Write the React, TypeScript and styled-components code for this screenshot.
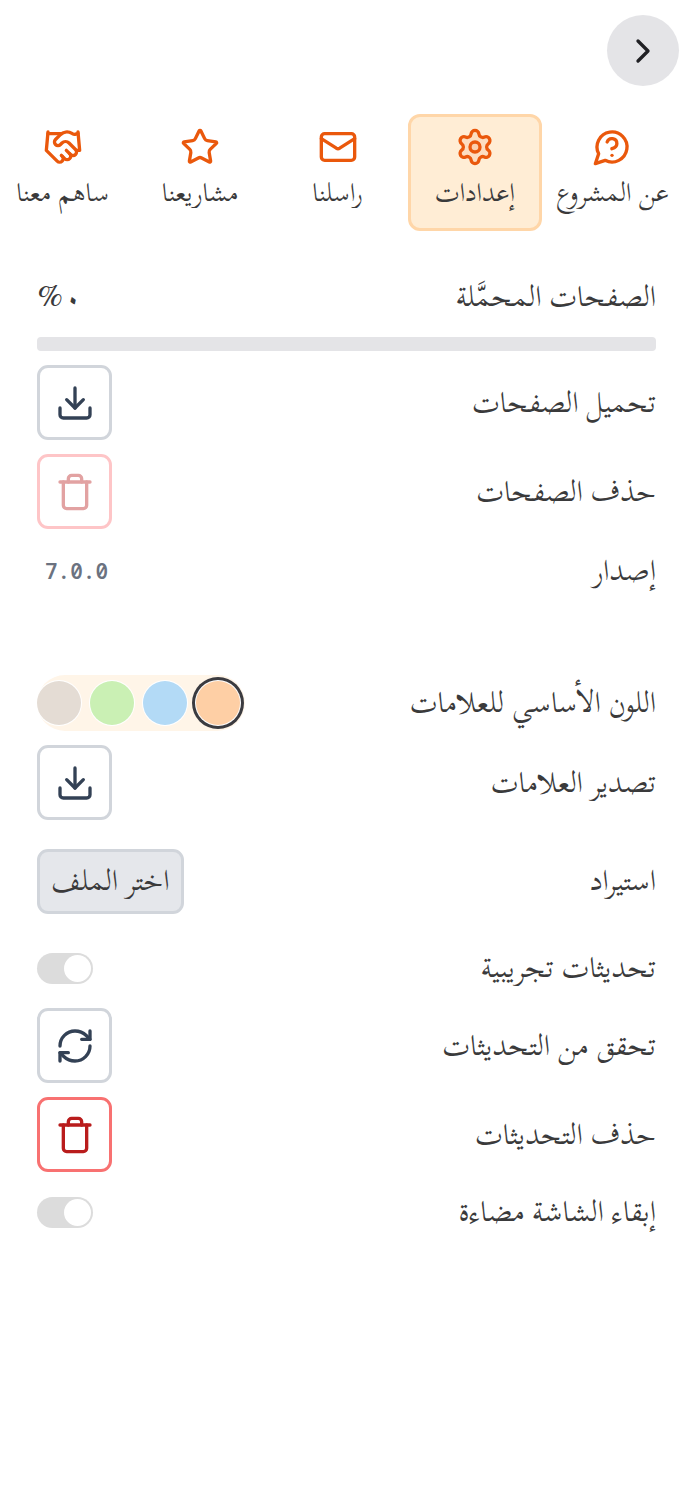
import { useState } from "react";
import type { ReactNode } from "react";
import styled, { createGlobalStyle, css } from "styled-components";
import {
  ChevronRight,
  Download,
  Handshake,
  Mail,
  RefreshCw,
  Settings,
  Star,
  Trash,
} from "lucide-react";

const GlobalStyle = createGlobalStyle`
  *, *::before, *::after { box-sizing: border-box; }
  body {
    margin: 0;
    background: #fff;
    color: #3a3a3b;
    font-family: "Scheherazade New", "DejaVu Sans", serif;
    overflow-x: hidden;
  }
  button, input { font: inherit; color: inherit; }
`;

const Page = styled.main`
  direction: rtl;
`;

const Header = styled.header`
  display: flex;
  padding: 15px 14px 28px;
`;

const BackButton = styled.button`
  display: grid;
  place-items: center;
  width: 72px;
  height: 71px;
  padding: 0;
  border: 0;
  border-radius: 50%;
  background: #e4e4e7;
  color: #202024;
`;

const Tabs = styled.nav`
  display: grid;
  grid-template-columns: repeat(5, 1fr);
  gap: 4px;
  margin: 0 14px 0 -4px;
`;

const Tab = styled.button<{ $active: boolean }>`
  display: flex;
  flex-direction: column;
  align-items: center;
  gap: 8px;
  height: 117px;
  padding: 10px 0 0;
  border: 3px solid ${(p) => (p.$active ? "#ffd6a8" : "transparent")};
  border-radius: 12px;
  background: ${(p) => (p.$active ? "#ffedd5" : "transparent")};
  font-size: 26px;
  line-height: 36px;
  white-space: nowrap;

  svg {
    flex: none;
    color: #ea580c;
    fill: ${(p) => (p.$active ? "rgba(234, 88, 12, 0.1)" : "none")};
  }
`;

const Section = styled.section<{ $top: number }>`
  display: flex;
  flex-direction: column;
  gap: 14px;
  padding: 0 37px;
  margin-top: ${(p) => p.$top}px;
`;

const Row = styled.div<{ $height: number }>`
  display: flex;
  align-items: center;
  justify-content: space-between;
  min-height: ${(p) => p.$height}px;
`;

const Label = styled.label`
  font-size: 29px;
  line-height: 48px;
`;

const Percent = styled.span`
  padding-bottom: 4px;
  font-size: 34px;
  font-weight: 500;
  line-height: 48px;
`;

const Progress = styled.progress`
  appearance: none;
  display: block;
  width: 100%;
  height: 14px;
  border: 0;
  border-radius: 4px;
  background: #e4e4e7;
  overflow: hidden;

  &::-webkit-progress-bar { background: #e4e4e7; }
  &::-webkit-progress-value { background: #ea580c; }
`;

const tones = {
  neutral: css`border-color: #d1d5db; color: #334155;`,
  danger: css`border-color: #f87171; color: #b91c1c;`,
  faded: css`border-color: #fec5c7; color: #e2a2a2;`,
};

const IconButton = styled.button<{ $tone: keyof typeof tones }>`
  display: grid;
  place-items: center;
  width: 75px;
  height: 75px;
  padding: 0;
  border: 3px solid;
  border-radius: 11px;
  background: #fff;
  ${(p) => tones[p.$tone]}
`;

const FileButton = styled.button`
  height: 65px;
  padding: 0 11px;
  border: 3px solid #d1d5db;
  border-radius: 11px;
  background: #e5e7eb;
  font-size: 29px;
  line-height: 48px;
`;

const Version = styled.output`
  padding: 0 8px;
  color: #6b7280;
  font-family: "Noto Sans Mono", "DejaVu Sans Mono", monospace;
  font-size: 21px;
  font-weight: 600;
  line-height: 32px;
  direction: ltr;
`;

const Swatches = styled.div`
  display: flex;
  align-items: center;
  gap: 9px;
  height: 56px;
  padding-right: 5px;
  border-radius: 28px;
  background: #fff5e8;
`;

const Swatch = styled.input<{ $color: string }>`
  appearance: none;
  width: 44px;
  height: 44px;
  margin: 0;
  border-radius: 50%;
  background: ${(p) => p.$color};
  box-shadow: 0 0 0 1px #fff;

  &:checked { box-shadow: 0 0 0 1px #fff, 0 0 0 4px #3b3b40; }
`;

const Switch = styled.input`
  appearance: none;
  display: flex;
  align-items: center;
  width: 56px;
  height: 31px;
  margin: 0;
  padding: 0 2px;
  border-radius: 16px;
  background: #dcdcdc;

  &::before {
    content: "";
    width: 27px;
    height: 27px;
    border-radius: 50%;
    background: #fff;
  }
  &:checked { background: #ea580c; justify-content: flex-end; }
`;

function QuestionBubble() {
  return (
    <svg width="40" height="40" viewBox="0 0 24 24" stroke="currentColor" strokeWidth="2" strokeLinecap="round" strokeLinejoin="round">
      <path d="M7.9 20A9 9 0 1 0 4 16.1L2 22Z" />
      <path d="M9.09 9a3 3 0 0 1 5.83 1c0 2-3 3-3 3" />
      <path d="M12 17h.01" />
    </svg>
  );
}

const tabs: { id: string; text: string; icon: ReactNode }[] = [
  { id: "about", text: "عن المشروع", icon: <QuestionBubble /> },
  { id: "settings", text: "إعدادات", icon: <Settings size={40} /> },
  { id: "contact", text: "راسلنا", icon: <Mail size={40} /> },
  { id: "projects", text: "مشاريعنا", icon: <Star size={40} /> },
  { id: "contribute", text: "ساهم معنا", icon: <Handshake size={40} /> },
];

const swatches = [
  { name: "برتقالي", color: "#fecfa5" },
  { name: "أزرق", color: "#b3daf6" },
  { name: "أخضر", color: "#caf0b4" },
  { name: "رمادي", color: "#e4dcd4" },
];

export default function App() {
  const [tab, setTab] = useState("settings");
  const [color, setColor] = useState(swatches[0].color);

  return (
    <Page lang="ar">
      <GlobalStyle />
      <Header>
        <BackButton type="button" aria-label="رجوع">
          <ChevronRight size={40} />
        </BackButton>
      </Header>
      <Tabs>
        {tabs.map((t) => (
          <Tab key={t.id} type="button" $active={t.id === tab} onClick={() => setTab(t.id)}>
            {t.icon}
            {t.text}
          </Tab>
        ))}
      </Tabs>

      <Section $top={40}>
        <Row $height={52}>
          <Label htmlFor="loaded">الصفحات المحمَّلة</Label>
          <Percent>٠%</Percent>
        </Row>
        <Progress id="loaded" max={100} value={0} />
        <Row $height={75}>
          <Label htmlFor="download">تحميل الصفحات</Label>
          <IconButton id="download" type="button" $tone="neutral"><Download size={40} /></IconButton>
        </Row>
        <Row $height={75}>
          <Label htmlFor="remove-pages">حذف الصفحات</Label>
          <IconButton id="remove-pages" type="button" disabled $tone="faded"><Trash size={40} /></IconButton>
        </Row>
        <Row $height={56}>
          <Label htmlFor="version">إصدار</Label>
          <Version id="version">7.0.0</Version>
        </Row>
      </Section>

      <Section $top={76}>
        <Row $height={56}>
          <Label as="span" id="color-label">اللون الأساسي للعلامات</Label>
          <Swatches role="radiogroup" aria-labelledby="color-label">
            {swatches.map((s) => (
              <Swatch
                key={s.color}
                type="radio"
                name="color"
                aria-label={s.name}
                $color={s.color}
                checked={s.color === color}
                onChange={() => setColor(s.color)}
              />
            ))}
          </Swatches>
        </Row>
        <Row $height={75}>
          <Label htmlFor="export">تصدير العلامات</Label>
          <IconButton id="export" type="button" $tone="neutral"><Download size={40} /></IconButton>
        </Row>
        <Row $height={94}>
          <Label htmlFor="import">استيراد</Label>
          <FileButton id="import" type="button">اختر الملف</FileButton>
        </Row>
        <Row $height={52}>
          <Label htmlFor="beta">تحديثات تجريبية</Label>
          <Switch id="beta" type="checkbox" />
        </Row>
        <Row $height={75}>
          <Label htmlFor="check">تحقق من التحديثات</Label>
          <IconButton id="check" type="button" $tone="neutral"><RefreshCw size={40} /></IconButton>
        </Row>
        <Row $height={75}>
          <Label htmlFor="remove-updates">حذف التحديثات</Label>
          <IconButton id="remove-updates" type="button" $tone="danger"><Trash size={40} /></IconButton>
        </Row>
        <Row $height={52}>
          <Label htmlFor="awake">إبقاء الشاشة مضاءة</Label>
          <Switch id="awake" type="checkbox" />
        </Row>
      </Section>
    </Page>
  );
}
